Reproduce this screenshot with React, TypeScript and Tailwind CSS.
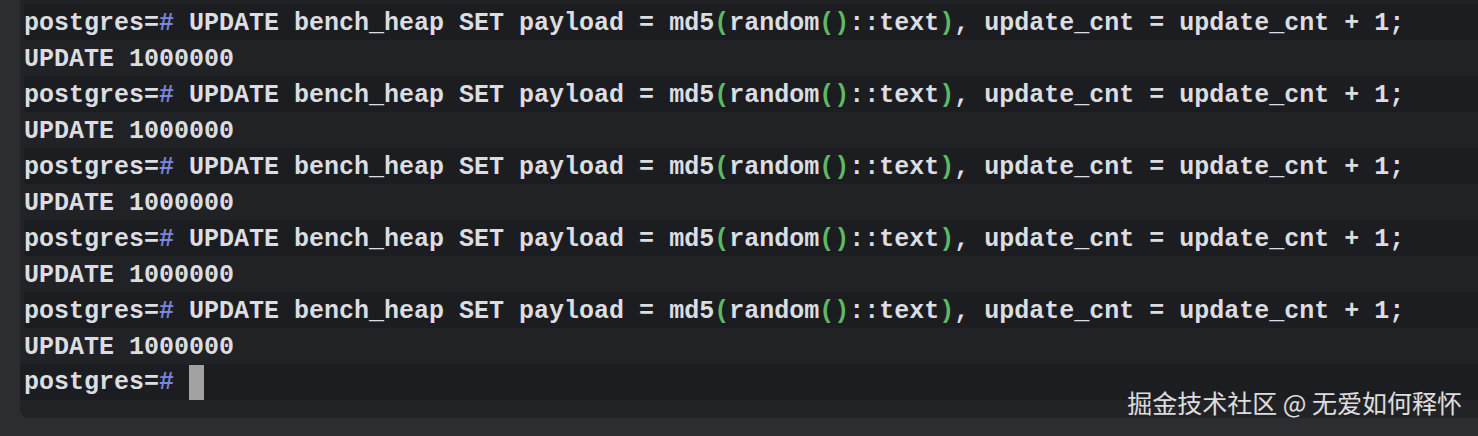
import React from "react";

const mono = { fontFamily: '"Liberation Mono", "DejaVu Sans Mono", monospace' };

const Prompt: React.FC<{ children?: React.ReactNode }> = ({ children }) => (
  <div className="h-9 leading-9 bg-[#1c1d20] whitespace-pre">
    <span className="relative top-[2px]">
      postgres=<span className="text-[#7b86e0]">#</span>
      {children}
    </span>
  </div>
);

const Output: React.FC<{ text: string }> = ({ text }) => (
  <div className="h-9 leading-9 bg-[#212225] whitespace-pre">
    <span className="relative top-[2px]">{text}</span>
  </div>
);

const Query = () => (
  <>
    {" UPDATE bench_heap SET payload = md5"}
    <span className="text-[#5fb865]">(</span>
    {"random"}
    <span className="text-[#5fb865]">()</span>
    {"::text"}
    <span className="text-[#5fb865]">)</span>
    {", update_cnt = update_cnt + 1;"}
  </>
);

export default function App() {
  const runs = [0, 1, 2, 3, 4];
  return (
    <div className="w-[1478px] h-[436px] bg-[#2b2d30] pl-[20px] overflow-hidden">
      <div className="relative h-[418px] bg-[#222326] rounded-bl-lg pt-1">
        <div
          className="text-[25px] font-bold text-[#dcdde0]"
          style={mono}
        >
          {runs.map((i) => (
            <React.Fragment key={i}>
              <div className="pl-1">
                <Prompt>
                  <Query />
                </Prompt>
              </div>
              <div className="pl-1">
                <Output text="UPDATE 1000000" />
              </div>
            </React.Fragment>
          ))}
          <div className="pl-1 h-9 leading-9 bg-[#1c1d20] whitespace-pre flex items-center">
            <span className="relative top-[1px]">
              postgres=<span className="text-[#7b86e0]">#</span>
            </span>
            <span className="ml-[15px] inline-block w-[15px] h-[35px] bg-[#a2a2a2]" />
          </div>
        </div>
        <div
          className="absolute right-[16px] bottom-[-3px] text-[25px] text-white/85"
          style={{ fontFamily: '"Noto Sans CJK SC", "Noto Sans", sans-serif' }}
        >
          掘金技术社区 @ 无爱如何释怀
        </div>
      </div>
    </div>
  );
}
